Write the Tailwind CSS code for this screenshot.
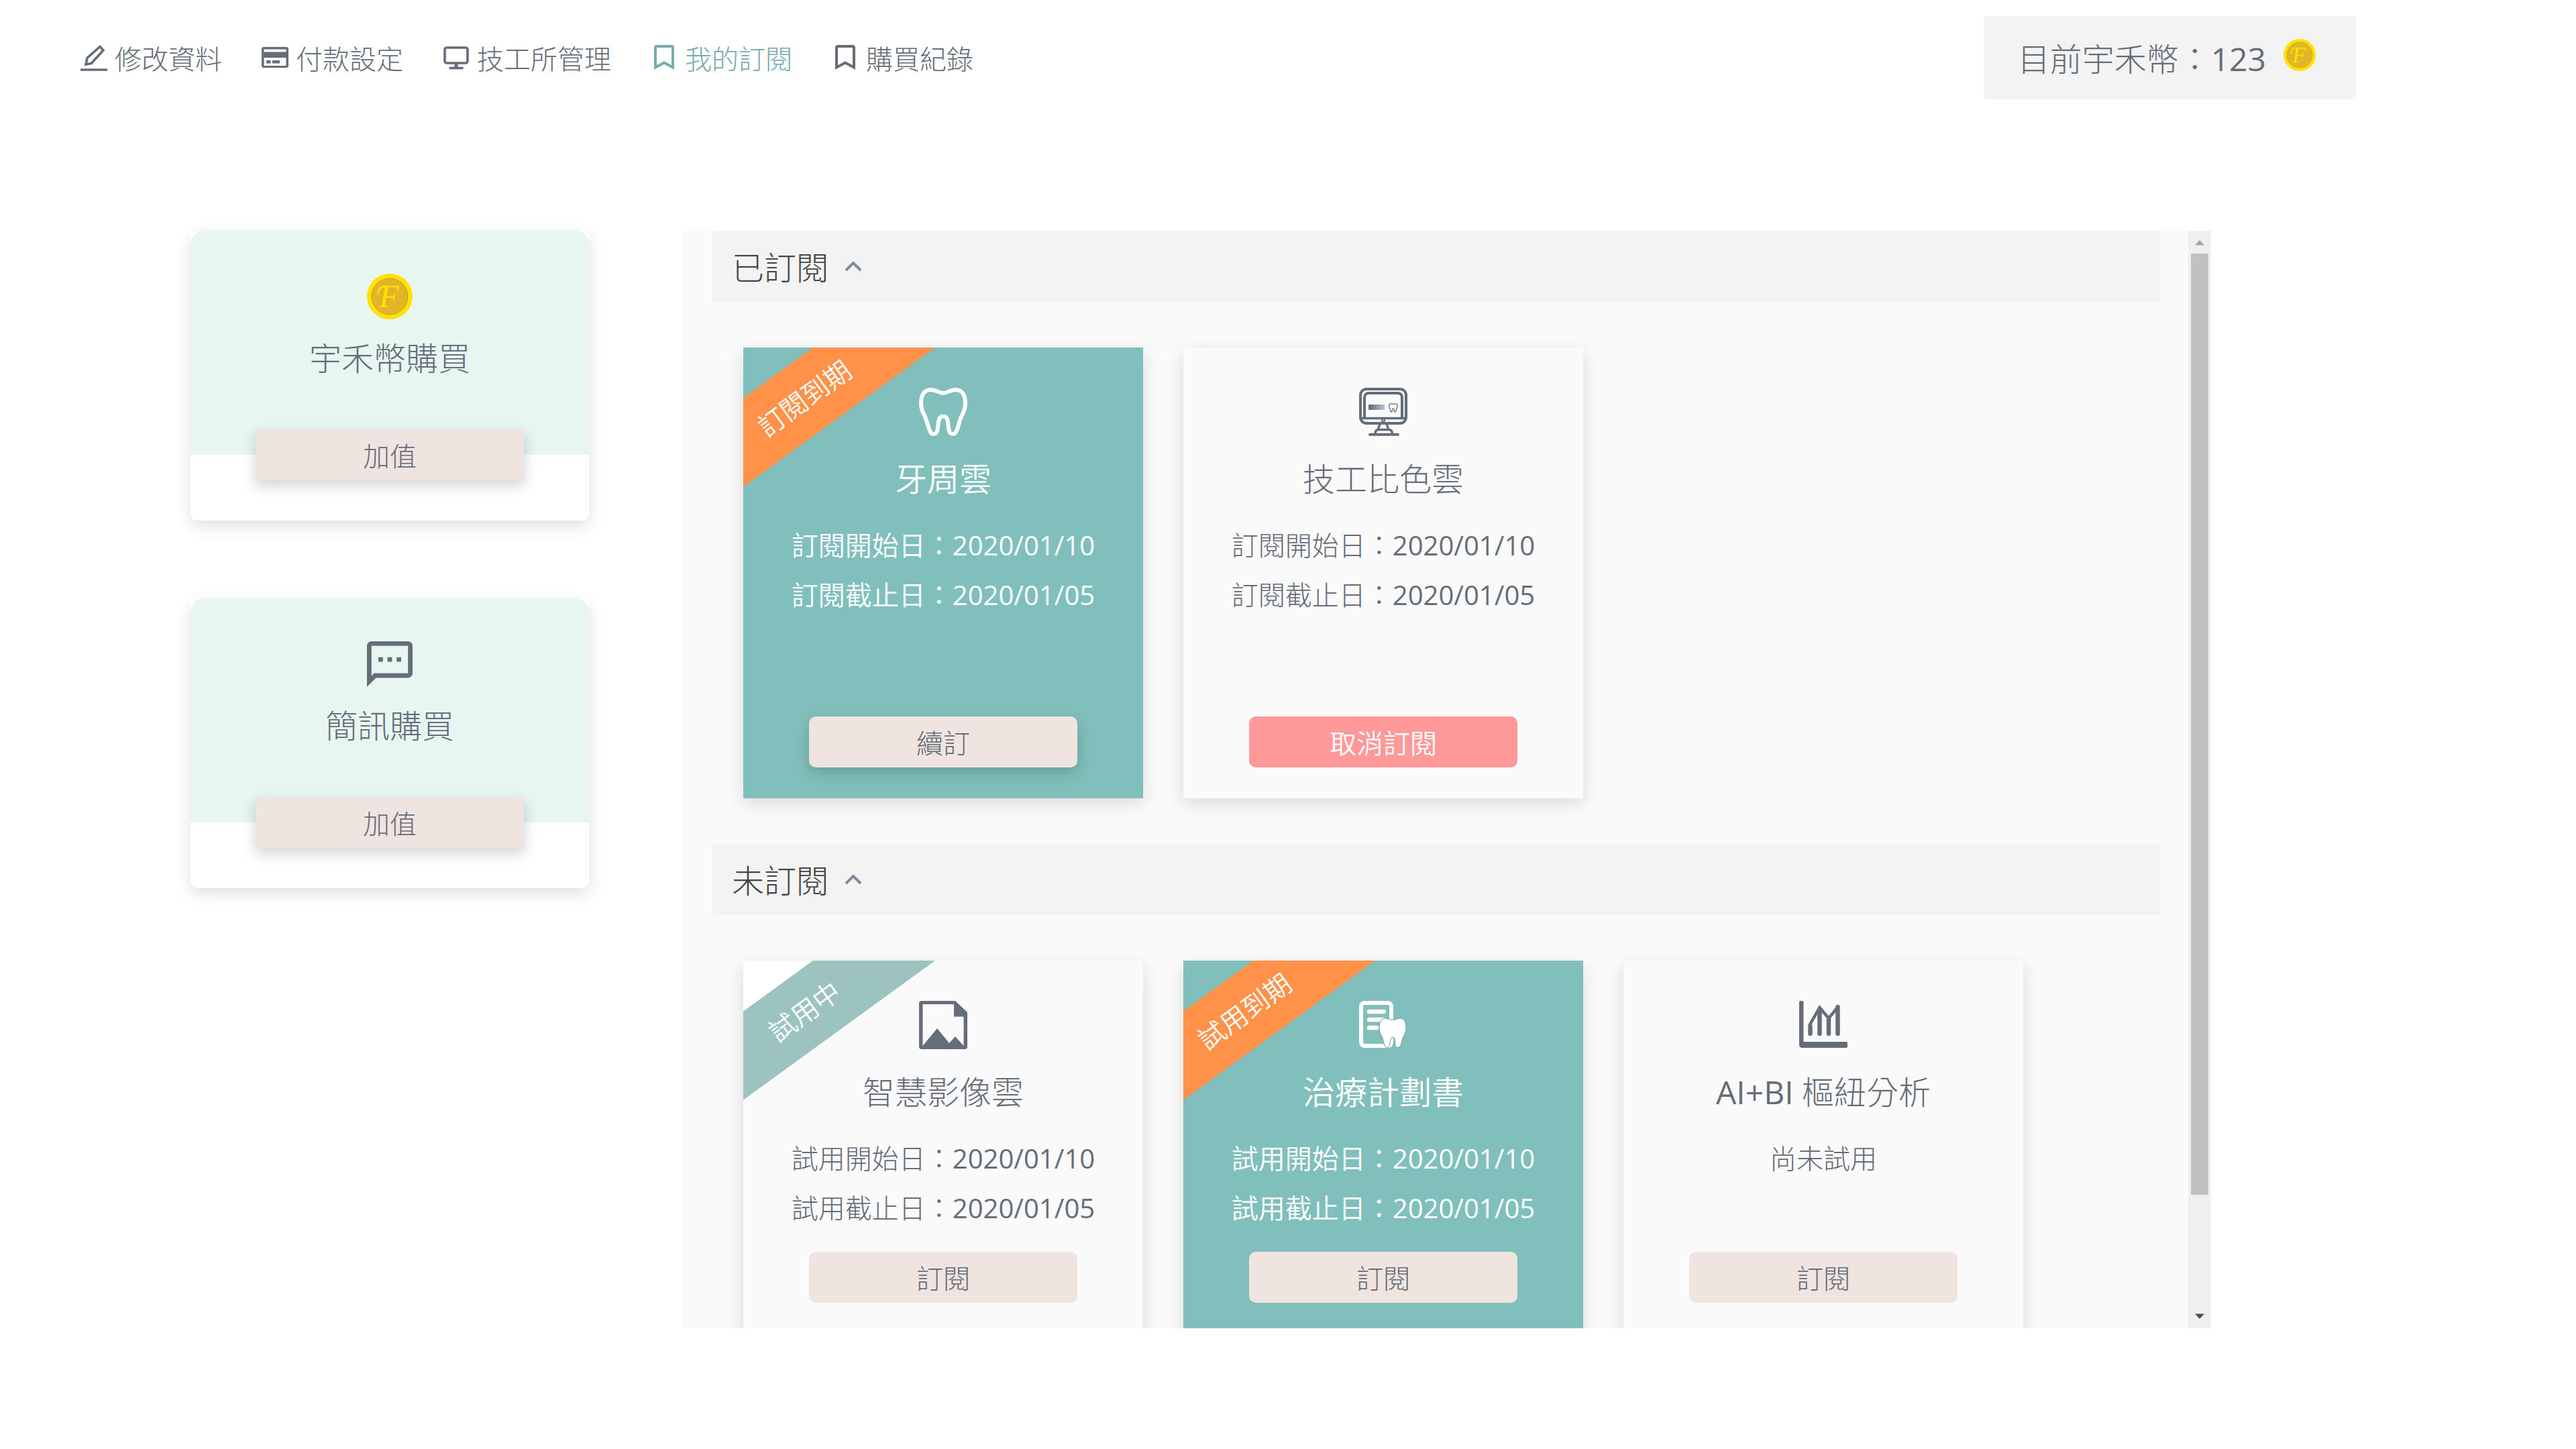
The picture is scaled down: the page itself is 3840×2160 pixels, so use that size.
<!DOCTYPE html>
<html lang="zh-Hant">
<head>
<meta charset="utf-8">
<meta name="viewport" content="width=device-width, initial-scale=1">
<title>我的訂閱</title>
<script src="https://cdn.jsdelivr.net/npm/@tailwindcss/browser@4"></script>
</head>
<body class="min-h-screen bg-white font-['Open_Sans','Noto_Sans_CJK_TC',sans-serif] text-[40px] font-light text-[#656d78]">

<svg class="hidden" aria-hidden="true">
  <symbol id="coin" viewBox="0 0 68 68">
    <circle cx="34" cy="34" r="34" fill="#ffe200"/>
    <circle cx="34" cy="34" r="27" fill="#e2b528" stroke="#c79a1c" stroke-width="1"/>
    <text x="33" y="50" text-anchor="middle" font-family="'Liberation Serif', serif" font-style="italic" font-weight="400" font-size="48" fill="#ffe200">F</text>
    <path d="M27 19C20 19 16 24 17 31" fill="none" stroke="#ffe200" stroke-width="2.500" stroke-linecap="round"/>
  </symbol>
  <symbol id="bookmark" viewBox="0 0 50 50">
    <path d="M12 39.5V10Q12 8 14 8H36Q38 8 38 10V39.5L25 32.5Z" fill="none" stroke="currentColor" stroke-width="4"/>
  </symbol>
</svg>

<header class="flex items-center justify-between pt-6 pr-[328px] pl-[115px]">
  <nav class="flex items-center gap-[54px] leading-[60px]">
    <a href="#" class="flex items-center gap-1.5">
      <svg class="size-[50px]" viewBox="0 0 50 50" fill="none" stroke="currentColor" stroke-width="3.6"><path d="M34 8.500L39 14L21 33.500L13 35L15 25.500Z"/><path d="M5 43H45"/></svg>
      <span class="pt-1">修改資料</span>
    </a>
    <a href="#" class="flex items-center gap-1.5">
      <svg class="size-[50px]" viewBox="0 0 50 50" fill="currentColor"><path fill-rule="evenodd" d="M8 9H42Q45 9 45 12V37Q45 40 42 40H8Q5 40 5 37V12Q5 9 8 9ZM8.500 12.500V16.500H41.500V12.500ZM8.500 25V37H41.500V25Z"/><path d="M12 29H18.500V33.500H12ZM21 29H32V33.500H21Z"/></svg>
      <span class="pt-1">付款設定</span>
    </a>
    <a href="#" class="flex items-center gap-1.5">
      <svg class="size-[50px]" viewBox="0 0 50 50" fill="none" stroke="currentColor" stroke-width="3.600"><rect x="8" y="10" width="34" height="23" rx="3"/><path d="M25 34V40" stroke-width="5"/><path d="M14.500 40.500H35.500"/></svg>
      <span class="pt-1">技工所管理</span>
    </a>
    <a href="#" aria-current="page" class="flex items-center gap-1.5 text-[#76acab]">
      <svg class="size-[50px]"><use href="#bookmark"/></svg>
      <span class="pt-1">我的訂閱</span>
    </a>
    <a href="#" class="flex items-center gap-1.5">
      <svg class="size-[50px]"><use href="#bookmark"/></svg>
      <span class="pt-1">購買紀錄</span>
    </a>
  </nav>
  <div class="flex h-[124px] items-center gap-[26px] bg-[#f3f3f3] pr-[60px] pl-[50px] text-[48px]">
    <p class="pt-1">目前宇禾幣：<span class="font-normal">123</span></p>
    <svg class="mb-2 size-12"><use href="#coin"/></svg>
  </div>
</header>

<main class="mt-[196px] flex items-start gap-[140px] pr-[544px] pl-[284px]">
  <aside class="flex w-[594px] shrink-0 flex-col gap-[116px]">
    <article class="rounded-[10px] bg-white pb-[60px] shadow-[0_8px_24px_rgba(0,0,0,0.13)]">
      <div class="flex h-[334px] flex-col items-center rounded-t-[20px] bg-[#e7f6f1] pt-16">
        <svg class="size-[68px]"><use href="#coin"/></svg>
        <h2 class="mt-[26px] text-[48px] leading-[64px]">宇禾幣購買</h2>
      </div>
      <button type="button" class="relative mx-auto -mt-[38px] block h-[76px] w-[400px] bg-[#efe4df] pt-1 shadow-[0_8px_20px_rgba(0,0,0,0.18)]">加值</button>
    </article>
    <article class="rounded-[10px] bg-white pb-[60px] shadow-[0_8px_24px_rgba(0,0,0,0.13)]">
      <div class="flex h-[334px] flex-col items-center rounded-t-[20px] bg-[#e7f6f1] pt-16">
        <svg class="size-[68px]" viewBox="2 2 20 20" fill="currentColor"><path d="M20 2H4c-1.100 0-2 .9-2 2v18l4-4h14c1.100 0 2-.9 2-2V4c0-1.100-.9-2-2-2zm0 14H5.170L4 17.170V4h16v12zM7 9h2v2H7zm4 0h2v2h-2zm4 0h2v2h-2z"/></svg>
        <h2 class="mt-[26px] text-[48px] leading-[64px]">簡訊購買</h2>
      </div>
      <button type="button" class="relative mx-auto -mt-[38px] block h-[76px] w-[400px] bg-[#efe4df] pt-1 shadow-[0_8px_20px_rgba(0,0,0,0.18)]">加值</button>
    </article>
  </aside>

  <section class="flex h-[calc(100vh-524px)] min-w-0 flex-1 bg-[#fafafa]">
    <div class="min-w-0 flex-1 overflow-y-auto pr-[42px] pl-[44px] [scrollbar-width:none]">
      <h2>
        <button type="button" aria-expanded="true" class="flex h-[106px] w-full items-center gap-6 bg-[#f3f3f3] pl-[29px] text-[48px] text-[#444444]">
          <span class="pt-1">已訂閱</span>
          <svg class="h-4 w-[26px]" viewBox="0 0 26 16" fill="none" stroke="#7f8b9b" stroke-width="4"><path d="M2 14L13 3L24 14"/></svg>
        </button>
      </h2>
      <div class="flex flex-wrap gap-[60px] px-[46px] py-[68px]">
        <article class="relative flex h-[672px] w-[596px] flex-col items-center overflow-hidden bg-[#80bfbb] pt-[60px] font-[350] text-white shadow-[0_8px_24px_rgba(0,0,0,0.13)]">
          <span class="absolute top-[22px] left-[-149px] h-[107px] w-[480px] -rotate-36 bg-[#ff9149] text-center leading-[107px]">訂閱到期</span>
          <svg class="relative size-[72px]" viewBox="0 0 72 72" fill="none" stroke="currentColor" stroke-width="6" stroke-linejoin="round"><path d="M36 8C30 8 26 3 17 3C8 3 3 11 3 23C3 30 5 36 8 41C12 49 14 61 17 66C19 70 25 70 27 65C29 58 28 52 30 47C32 41 40 41 42 47C44 52 43 58 45 65C47 70 53 70 55 66C58 61 60 49 64 41C67 36 69 30 69 23C69 11 64 3 55 3C46 3 42 8 36 8Z"/></svg>
          <h3 class="mt-8 text-[48px] leading-[64px]">牙周雲</h3>
          <div class="mt-[30px] leading-[74px]">
            <p>訂閱開始日：<time class="font-normal">2020/01/10</time></p>
            <p>訂閱截止日：<time class="font-normal">2020/01/05</time></p>
          </div>
          <button type="button" class="mt-auto mb-[46px] h-[76px] w-[400px] rounded-[10px] bg-[#efe4df] pt-1 font-light text-[#656d78] shadow-[0_8px_20px_rgba(0,0,0,0.18)]">續訂</button>
        </article>

        <article class="flex h-[672px] w-[596px] flex-col items-center bg-[#fafafa] pt-[60px] shadow-[0_8px_24px_rgba(0,0,0,0.13)]">
          <svg class="size-[72px]" viewBox="0 0 72 72" fill="none" stroke="currentColor" stroke-width="4">
            <rect x="2" y="2" width="68" height="51" rx="9"/>
            <path d="M8 45V15Q8 8 15 8H57Q64 8 64 15V45"/>
            <path d="M2 45.500H70" stroke-width="3.500"/>
            <circle cx="36" cy="48.500" r="2" stroke-width="2"/>
            <path d="M31 54L28.500 61M41 54L43.500 61" stroke-width="3.500"/>
            <path d="M24 69C24 64 26 62.500 29 62.500H44C47 62.500 49.500 64 49.500 69" stroke-width="3.500"/>
            <path d="M16 69.800H58" stroke-linecap="round"/>
            <g stroke="none"><path d="M14 25h4v8h-4z" fill="#656d78"/><path d="M18 25h4v8h-4z" fill="#747d89"/><path d="M22 25h4v8h-4z" fill="#858e9b"/><path d="M26 25h4v8h-4z" fill="#949eac"/><path d="M30 25h4v8h-4z" fill="#a3aebd"/><path d="M34 25h4v8h-4z" fill="#b2bfd0"/></g>
            <path transform="translate(44 23) scale(.19)" stroke-width="7" d="M36 8C30 8 26 3 17 3C8 3 3 11 3 23C3 30 5 36 8 41C12 49 14 61 17 66C19 70 25 70 27 65C29 58 28 52 30 47C32 41 40 41 42 47C44 52 43 58 45 65C47 70 53 70 55 66C58 61 60 49 64 41C67 36 69 30 69 23C69 11 64 3 55 3C46 3 42 8 36 8Z"/>
          </svg>
          <h3 class="mt-8 text-[48px] leading-[64px]">技工比色雲</h3>
          <div class="mt-[30px] leading-[74px]">
            <p>訂閱開始日：<time class="font-normal">2020/01/10</time></p>
            <p>訂閱截止日：<time class="font-normal">2020/01/05</time></p>
          </div>
          <button type="button" class="mt-auto mb-[46px] h-[76px] w-[400px] rounded-[10px] bg-[#ff9999] pt-1 font-[350] text-white">取消訂閱</button>
        </article>
      </div>

      <h2>
        <button type="button" aria-expanded="true" class="flex h-[106px] w-full items-center gap-6 bg-[#f3f3f3] pl-[29px] text-[48px] text-[#444444]">
          <span class="pt-1">未訂閱</span>
          <svg class="h-4 w-[26px]" viewBox="0 0 26 16" fill="none" stroke="#7f8b9b" stroke-width="4"><path d="M2 14L13 3L24 14"/></svg>
        </button>
      </h2>
      <div class="flex flex-wrap gap-[60px] px-[46px] py-[68px]">
        <article class="relative flex h-[672px] w-[596px] flex-col items-center overflow-hidden bg-[#fafafa] pt-[60px] shadow-[0_8px_24px_rgba(0,0,0,0.13)]">
          <span class="absolute top-0 left-0 h-[77px] w-[100px] bg-white"></span>
          <span class="absolute top-[22px] left-[-149px] h-[107px] w-[480px] -rotate-36 bg-[#9dc3c0] text-center leading-[107px] font-[350] text-white">試用中</span>
          <svg class="relative size-[72px]" viewBox="0 0 72 72" fill="currentColor"><path fill-rule="evenodd" d="M4 0H54L72 17V68Q72 72 68 72H4Q0 72 0 68V4Q0 0 4 0ZM5.500 5V67L27 41L45 63L54 53L66.500 67V23.500H52V5Z"/></svg>
          <h3 class="mt-8 text-[48px] leading-[64px]">智慧影像雲</h3>
          <div class="mt-[30px] min-h-[148px] leading-[74px]">
            <p>試用開始日：<time class="font-normal">2020/01/10</time></p>
            <p>試用截止日：<time class="font-normal">2020/01/05</time></p>
          </div>
          <button type="button" class="mt-7 h-[76px] w-[400px] rounded-[10px] bg-[#efe4df] pt-1">訂閱</button>
        </article>

        <article class="relative flex h-[672px] w-[596px] flex-col items-center overflow-hidden bg-[#80bfbb] pt-[60px] font-[350] text-white shadow-[0_8px_24px_rgba(0,0,0,0.13)]">
          <span class="absolute top-[22px] left-[-149px] h-[107px] w-[480px] -rotate-36 bg-[#ff9149] text-center leading-[107px]">試用到期</span>
          <svg class="relative size-[72px]" viewBox="0 0 72 72">
            <rect x="3" y="3" width="45" height="64" rx="5" fill="none" stroke="currentColor" stroke-width="6"/>
            <path d="M15 16H36.500M15 28H36.500M15 40H26" stroke="currentColor" stroke-width="6.500" stroke-linecap="round"/>
            <path d="M50 28.500C46 28.500 43 26 39 26C33 26 30 31 30 39C30 46 32 50 34 53C36 58 37 66 39 68C41 70 44 70 45 67C47 62 46 54 50 54C54 54 53 62 54 67C55 70 59 70 61 68C63 66 64 58 66 53C68 50 70 46 70 39C70 31 67 26 61 26C57 26 54 28.500 50 28.500Z" fill="currentColor" stroke="#5f9f9b" stroke-width="1"/>
          </svg>
          <h3 class="mt-8 text-[48px] leading-[64px]">治療計劃書</h3>
          <div class="mt-[30px] min-h-[148px] leading-[74px]">
            <p>試用開始日：<time class="font-normal">2020/01/10</time></p>
            <p>試用截止日：<time class="font-normal">2020/01/05</time></p>
          </div>
          <button type="button" class="mt-7 h-[76px] w-[400px] rounded-[10px] bg-[#efe4df] pt-1 font-light text-[#656d78]">訂閱</button>
        </article>

        <article class="flex h-[672px] w-[596px] flex-col items-center bg-[#fafafa] pt-[60px] shadow-[0_8px_24px_rgba(0,0,0,0.13)]">
          <svg class="size-[72px]" viewBox="0 0 72 72" fill="currentColor">
            <path d="M2 0H4.500Q6.500 0 6.500 2V61H70Q72 61 72 63V68Q72 70 70 70H5Q0 70 0 65V2Q0 0 2 0Z"/>
            <g fill="none" stroke="currentColor" stroke-width="6.500" stroke-linecap="round"><path d="M16.500 38V49M30.500 16V49M44 28V49M57.500 9V49"/></g>
            <path d="M15 37L30.500 10L44 26L57 10" fill="none" stroke="currentColor" stroke-width="4.500"/>
          </svg>
          <h3 class="mt-8 text-[48px] leading-[64px]"><span class="font-normal">AI+BI</span> 樞紐分析</h3>
          <div class="mt-[30px] min-h-[148px] leading-[74px]">
            <p>尚未試用</p>
          </div>
          <button type="button" class="mt-7 h-[76px] w-[400px] rounded-[10px] bg-[#efe4df] pt-1">訂閱</button>
        </article>
      </div>
    </div>

    <div class="flex w-[34px] shrink-0 flex-col items-center bg-[#f0f0f0]" aria-hidden="true">
      <svg class="size-[34px] shrink-0" viewBox="0 0 34 34" fill="#a3a3a3"><path d="M10 21.500L17 14L24 21.500Z"/></svg>
      <div class="min-h-0 w-full flex-1 px-1"><div class="h-[89.5%] bg-[#c1c1c1]"></div></div>
      <svg class="size-[34px] shrink-0" viewBox="0 0 34 34" fill="#505050"><path d="M10 12.500L17 20L24 12.500Z"/></svg>
    </div>
  </section>
</main>

</body>
</html>
